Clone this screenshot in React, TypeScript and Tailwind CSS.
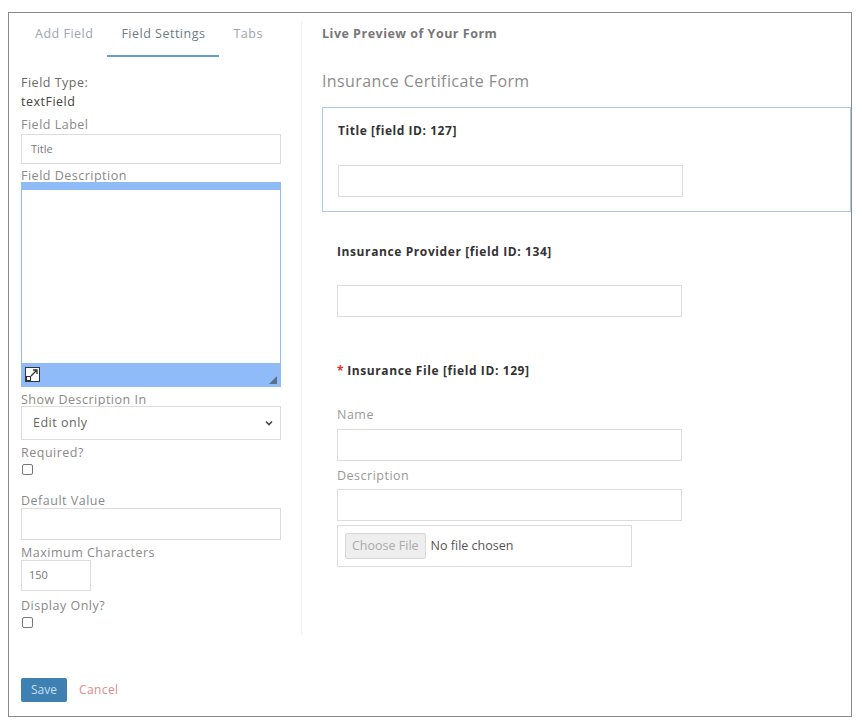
import React from 'react';

const font = { fontFamily: '"Open Sans", "Noto Sans", sans-serif' };

const Label: React.FC<{ text: string; className?: string }> = ({ text, className = '' }) => (
    <div className={`text-[12.5px] leading-[16px] tracking-[0.5px] text-[#8a8a8a] ${className}`}>{text}</div>
);

const Checkbox: React.FC<{ className?: string }> = ({ className = '' }) => (
    <div className={`w-[11px] h-[11px] rounded-[2px] border border-[#777] bg-white ${className}`} />
);

const PreviewInput: React.FC<{ className?: string }> = ({ className = '' }) => (
    <div className={`w-[345px] h-[32px] border border-[#dcdcdc] bg-white ${className}`} />
);

const App: React.FC = () => {
    return (
        <div className="w-[862px] h-[724px] bg-white pt-[12px] pl-[8px]" style={font}>
            <div className="w-[844px] h-[705px] border border-[#8a8a8a] flex flex-col overflow-hidden">
                <div className="flex flex-1">
                    {/* settings column */}
                    <div className="w-[292px] pl-[12px] pr-[20px] flex flex-col">
                        <div className="flex tracking-[0.5px]">
                            <div className="px-[14px] pt-[13px] pb-[15px] text-[12.5px] leading-[16px] text-[#9aa5b0]">Add Field</div>
                            <div className="px-[14px] pt-[13px] pb-[13px] text-[12.5px] leading-[16px] text-[#6d7a86] border-b-2 border-[#5fa0cc]">Field Settings</div>
                            <div className="px-[14px] pt-[13px] pb-[15px] text-[12.5px] leading-[16px] text-[#9aa5b0]">Tabs</div>
                        </div>

                        <div className="mt-[17px] text-[12.5px] leading-[18px] tracking-[0.5px] text-[#6a6a6a]">Field Type:</div>
                        <div className="mt-[1px] text-[12.5px] leading-[18px] tracking-[0.5px] text-[#444]">textField</div>

                        <Label text="Field Label" className="mt-[6px]" />
                        <div className="mt-[1px] h-[30px] border border-[#dcdcdc] flex items-center pl-[9px] text-[11px] text-[#777]">Title</div>

                        <Label text="Field Description" className="mt-[4px] -mb-[2px]" />
                        <div className="h-[205px] border border-[#8fbcf8] flex flex-col relative">
                            <div className="h-[7px] bg-[#8fbcf8]" />
                            <div className="flex-1 bg-white" />
                            <div className="h-[23px] bg-[#8fbcf8] flex items-center justify-between pl-[3px] pr-[3px]">
                                <svg width="15" height="15" viewBox="0 0 15 15">
                                    <rect x="0.5" y="0.5" width="14" height="14" fill="#fff" stroke="#333" />
                                    <rect x="1.5" y="9.5" width="4" height="4" fill="#fff" stroke="#333" />
                                    <path d="M6 9 L12 3 M8 3 H12 V7" stroke="#333" strokeWidth="1.3" fill="none" />
                                </svg>
                                <svg width="8" height="8" viewBox="0 0 8 8" className="self-end mb-[2px]">
                                    <path d="M8 0 L8 8 L0 8 Z" fill="#5a6f8a" />
                                </svg>
                            </div>
                        </div>

                        <Label text="Show Description In" className="mt-[5px] -mb-[2px]" />
                        <div className="h-[34px] border border-[#dcdcdc] flex items-center justify-between pl-[11px] pr-[6px] text-[12.5px] tracking-[0.5px] text-[#666]">
                            <span>Edit only</span>
                            <svg width="10" height="10" viewBox="0 0 10 10">
                                <path d="M2 3.5 L5 6.5 L8 3.5" stroke="#444" strokeWidth="1.6" fill="none" />
                            </svg>
                        </div>

                        <Label text="Required?" className="mt-[5px]" />
                        <Checkbox className="mt-[3px] ml-[1px]" />

                        <Label text="Default Value" className="mt-[18px] -mb-[1px]" />
                        <div className="h-[32px] border border-[#dcdcdc]" />

                        <Label text="Maximum Characters" className="mt-[5px] -mb-[1px]" />
                        <div className="w-[70px] h-[31px] border border-[#dcdcdc] flex items-center pl-[7px] text-[11px] text-[#777]">150</div>

                        <Label text="Display Only?" className="mt-[7px]" />
                        <Checkbox className="mt-[3px] ml-[1px]" />
                    </div>

                    {/* divider */}
                    <div className="w-px bg-[#efefef] mt-[8px] h-[614px]" />

                    {/* preview column */}
                    <div className="flex-1 pl-[20px] flex flex-col">
                        <div className="mt-[13px] text-[12.5px] leading-[16px] tracking-[0.5px] font-bold text-[#777]">Live Preview of Your Form</div>
                        <div className="mt-[28px] text-[16px] leading-[22px] tracking-[0.4px] text-[#8c8c8c]">Insurance Certificate Form</div>

                        <div className="mt-[15px] h-[105px] border border-[#a9cde6] pl-[15px] pt-[15px] flex flex-col">
                            <div className="text-[12px] leading-[16px] tracking-[0.55px] font-bold text-[#333]">Title [field ID: 127]</div>
                            <PreviewInput className="mt-[26px]" />
                        </div>

                        <div className="pl-[15px] flex flex-col">
                            <div className="mt-[32px] text-[12px] leading-[16px] tracking-[0.6px] font-bold text-[#333]">Insurance Provider [field ID: 134]</div>
                            <PreviewInput className="mt-[25px]" />

                            <div className="mt-[46px] text-[12px] leading-[16px] tracking-[0.6px] font-bold text-[#333]">
                                <span className="text-[#e03030] mr-[3px]">*</span>Insurance File [field ID: 129]
                            </div>

                            <div className="mt-[28px] text-[12.5px] leading-[16px] tracking-[0.5px] text-[#999]">Name</div>
                            <PreviewInput className="mt-[6px]" />
                            <div className="mt-[7px] text-[12.5px] leading-[16px] tracking-[0.5px] text-[#999]">Description</div>
                            <PreviewInput className="mt-[5px]" />
                            <div className="mt-[4px] w-[295px] h-[42px] border border-[#dcdcdc] flex items-center pl-[7px]">
                                <div className="h-[26px] px-[6px] flex items-center bg-[#eeeeee] border border-[#d8d8d8] rounded-[2px] text-[12.5px] text-[#aaa]">Choose File</div>
                                <span className="ml-[5px] text-[12.5px] text-[#555]">No file chosen</span>
                            </div>
                        </div>
                    </div>
                </div>

                {/* footer */}
                <div className="flex items-center pl-[12px] pb-[14px] gap-[12px]">
                    <div className="w-[46px] h-[24px] bg-[#3f80b2] rounded-[2px] flex items-center justify-center text-[12px] text-[#c9dff0]">Save</div>
                    <div className="text-[12px] tracking-[0.4px] text-[#e08a8a]">Cancel</div>
                </div>
            </div>
        </div>
    );
};

export default App;
